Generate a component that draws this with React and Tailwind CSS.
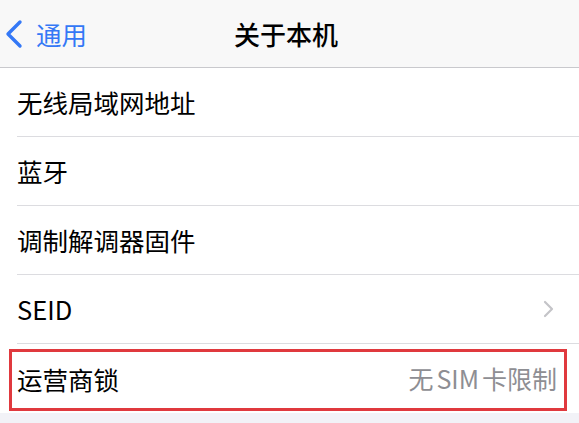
import React from "react";

const font = { fontFamily: '"Noto Sans CJK SC", "Noto Sans", sans-serif' };

function Row({ label, value, chevron, last }) {
  return (
    <div className="h-[69px] pl-[17px] bg-white">
      <div
        className={`h-full flex items-center justify-between pr-[22px] ${
          last ? "" : "border-b border-[#dcdce0]"
        }`}
      >
        <span className="text-[25.5px] leading-none text-black">{label}</span>
        {value && (
          <span className="text-[25px] leading-none text-[#8e8e93]">
            无<span className="px-[3px]">SIM</span>卡限制
          </span>
        )}
        {chevron && (
          <svg width="12" height="18" viewBox="0 0 12 18" fill="none" className="mr-[2px]">
            <polyline
              points="2,2 9,9 2,16"
              stroke="#c4c4c8"
              strokeWidth="2.2"
              strokeLinecap="round"
              strokeLinejoin="round"
            />
          </svg>
        )}
      </div>
    </div>
  );
}

export default function App() {
  return (
    <div className="w-[579px] h-[423px] bg-[#f2f2f7] overflow-hidden" style={font}>
      <header className="h-[68px] bg-[#f8f8f8] border-b border-[#c9c9cd] flex items-center relative">
        <div className="flex items-center pl-[4px] text-[#3478f6]">
          <svg width="19" height="30" viewBox="0 0 19 30" fill="none">
            <polyline
              points="16,3 4,15 16,27"
              stroke="#3478f6"
              strokeWidth="3.4"
              strokeLinecap="round"
              strokeLinejoin="round"
            />
          </svg>
          <span className="ml-[13px] text-[25.5px] leading-none">通用</span>
        </div>
        <span className="absolute left-[234px] text-[26px] leading-none font-medium text-black">
          关于本机
        </span>
      </header>

      <div className="relative">
        <Row label="无线局域网地址" />
        <Row label="蓝牙" />
        <Row label="调制解调器固件" />
        <Row label="SEID" chevron />
        <Row label="运营商锁" value last />
        <div className="absolute left-[9px] top-[281px] w-[558px] h-[62px] border-[3px] border-[#e0393e] pointer-events-none" />
      </div>
    </div>
  );
}
